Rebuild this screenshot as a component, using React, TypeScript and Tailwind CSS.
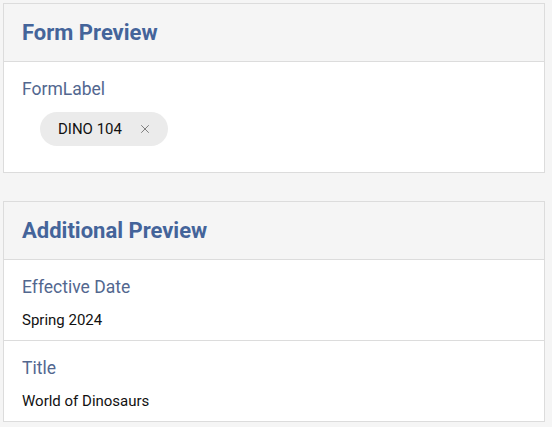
import { X } from 'lucide-react';

function CardHeader({ title }: { title: string }) {
  return (
    <div className="h-[58px] flex items-center px-[18px] bg-[#f5f5f5] border-b border-[#dcdcdc]">
      <h2 className="text-[22px] font-bold text-[#44649a] leading-none">{title}</h2>
    </div>
  );
}

function Field({ label, value, last }: { label: string; value: string; last?: boolean }) {
  return (
    <div className={`px-[18px] pt-[15px] pb-[10px] ${last ? '' : 'border-b border-[#dcdcdc]'}`}>
      <div className="text-[17.5px] leading-6 text-[#52678f]">{label}</div>
      <div className="mt-[11px] text-[15px] leading-5 text-[#111]">{value}</div>
    </div>
  );
}

export default function App() {
  return (
    <div className="min-h-[427px] bg-[#f5f5f5] pt-[3px] pl-[3px] font-['Roboto',sans-serif]">
      <section className="w-[542px] bg-white border border-[#dcdcdc]">
        <CardHeader title="Form Preview" />
        <div className="px-[18px] pt-[15px] pb-[26px]">
          <div className="text-[17.5px] leading-6 text-[#52678f]">FormLabel</div>
          <div className="mt-[11px] ml-[18px] inline-flex items-center h-[34px] rounded-full bg-[#ebebeb] pl-[18px] pr-[16px]">
            <span className="text-[15px] text-[#111]">DINO 104</span>
            <X className="ml-[16px] h-[14px] w-[14px] text-[#707070]" strokeWidth={1.5} />
          </div>
        </div>
      </section>

      <section className="mt-[28px] w-[542px] bg-white border border-[#dcdcdc]">
        <CardHeader title="Additional Preview" />
        <Field label="Effective Date" value="Spring 2024" />
        <Field label="Title" value="World of Dinosaurs" last />
      </section>
    </div>
  );
}
